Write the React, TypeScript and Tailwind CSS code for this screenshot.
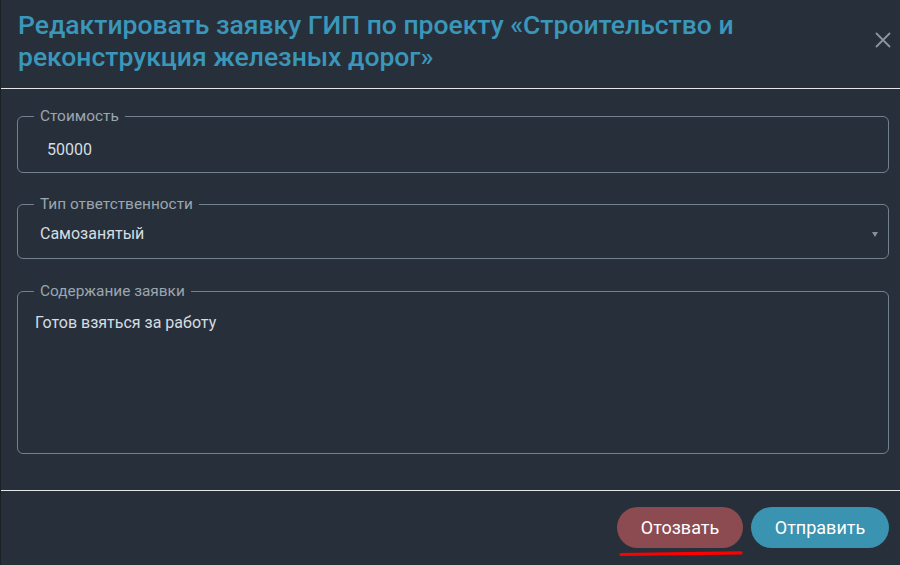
const fields = [
  { label: "Стоимость", value: "50000" },
  { label: "Тип ответственности", value: "Самозанятый" },
];

export default function App() {
  return (
    <div className="w-[900px] h-[565px] bg-[#1b2127] overflow-hidden" style={{ fontFamily: "Roboto, 'Noto Sans', sans-serif" }}>
      <div className="ml-px h-full bg-[#27303a] flex flex-col">
        <div className="flex items-start justify-between pt-[9px] pb-[15px] pl-[17px] pr-[9px]">
          <h1 className="text-[26.5px] leading-[32px] font-medium text-[#3b97ba] w-[790px]">
            Редактировать заявку ГИП по проекту «Строительство и реконструкция железных дорог»
          </h1>
          <button className="mt-[23px] w-4 h-4 text-[#8d959c]">
            <svg viewBox="0 0 16 16" className="w-4 h-4" fill="none" stroke="currentColor" strokeWidth="1.8">
              <path d="M1 1L15 15M15 1L1 15" />
            </svg>
          </button>
        </div>
        <div className="h-px bg-[#e4e6e8]" />

        <div className="flex flex-col gap-[21px] pt-[17px] pb-[36px] pl-4 pr-[11px]">
          <fieldset className="border border-[#72818d] rounded-md min-w-0 p-0">
            <legend className="ml-4 px-1.5 text-[15.4px] leading-[20px] text-[#9ba6b0]">{fields[0].label}</legend>
            <div className="pt-3 pb-[10px] pl-[29px] text-[16px] leading-[24px] text-[#d6dce1]">{fields[0].value}</div>
          </fieldset>

          <fieldset className="border border-[#72818d] rounded-md min-w-0 p-0">
            <legend className="ml-4 px-1.5 text-[15.4px] leading-[20px] text-[#9ba6b0]">{fields[1].label}</legend>
            <div className="pt-2 pb-[12px] pl-[22px] pr-[10px] flex items-center justify-between text-[16px] leading-[24px] text-[#d6dce1]">
              <span>{fields[1].value}</span>
              <svg viewBox="0 0 6 5" className="w-[6px] h-[5px] mt-[1px]" fill="#8a8f94">
                <path d="M0 0H6L3 5Z" />
              </svg>
            </div>
          </fieldset>

          <fieldset className="border border-[#72818d] rounded-md min-w-0 p-0 mt-px">
            <legend className="ml-4 px-1.5 text-[15.4px] leading-[20px] text-[#9ba6b0]">Содержание заявки</legend>
            <div className="pt-[10px] pl-[17px] h-[152px] text-[16px] leading-[24px] text-[#d6dce1]">Готов взяться за работу</div>
          </fieldset>
        </div>

        <div className="h-px bg-[#e4e6e8]" />
        <div className="relative flex justify-end gap-2 pt-[16px] pr-[11px]">
          <button className="w-[126px] h-[41px] rounded-full bg-[#8c4b50] text-white text-[18px]">Отозвать</button>
          <button className="w-[138px] h-[41px] rounded-full bg-[#3a93b1] text-white text-[18px]">Отправить</button>
          <svg className="absolute left-[617px] top-[58px] w-[126px] h-[8px]" viewBox="0 0 126 8" fill="none">
            <path d="M3 5.5C40 5 80 4.3 123 3.8" stroke="#ff0000" strokeWidth="3.2" strokeLinecap="round" />
          </svg>
        </div>
      </div>
    </div>
  );
}
